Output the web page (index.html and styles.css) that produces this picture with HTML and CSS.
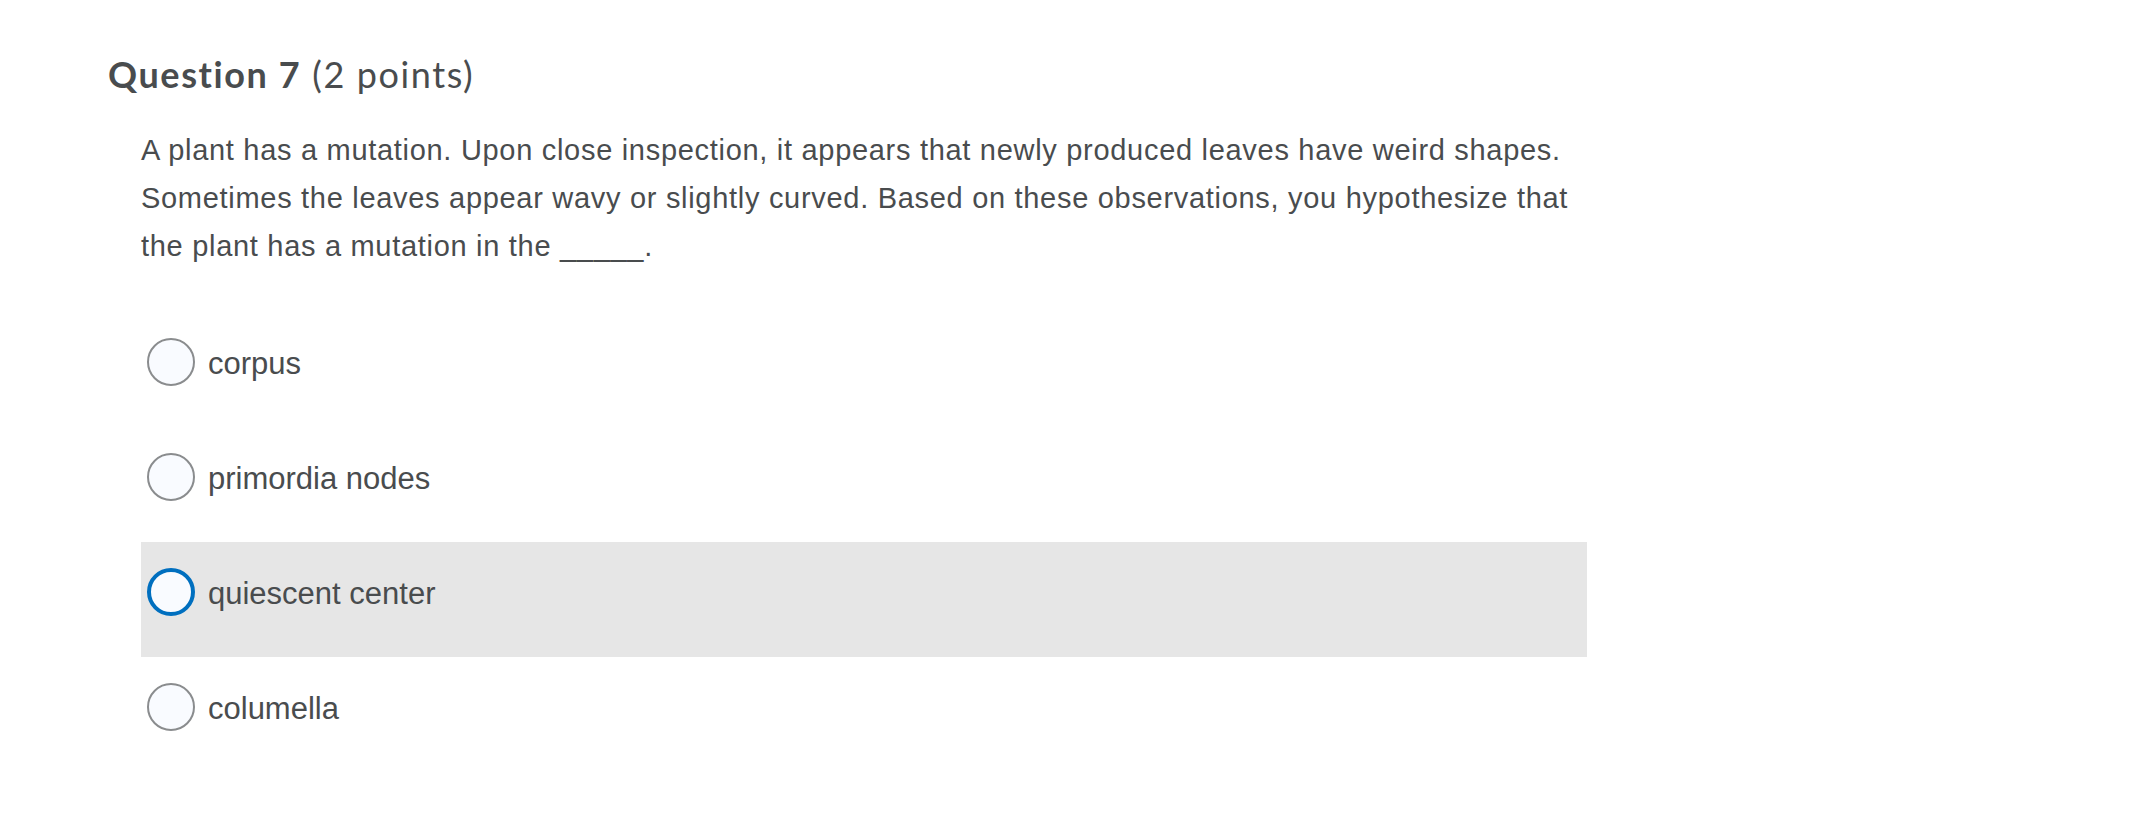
FILE: index.html
```html
<!DOCTYPE html>
<html lang="en">
<head>
<meta charset="utf-8">
<title>Question 7</title>
<link rel="stylesheet" href="styles.css">
</head>
<body>
<div class="page">
  <h2 class="q-title"><strong>Question 7</strong> <span class="pts">(2 points)</span></h2>
  <div class="q-body">
    <p class="q-text">A plant has a mutation. Upon close inspection, it appears that newly produced leaves have weird shapes. Sometimes the leaves appear wavy or slightly curved. Based on these observations, you hypothesize that the plant has a mutation in the _____.</p>
    <div class="options">
      <label class="option"><span class="radio"></span><span class="opt-text">corpus</span></label>
      <label class="option"><span class="radio"></span><span class="opt-text">primordia nodes</span></label>
      <label class="option option-focus"><span class="radio radio-focus"></span><span class="opt-text">quiescent center</span></label>
      <label class="option"><span class="radio"></span><span class="opt-text">columella</span></label>
    </div>
  </div>
</div>
</body>
</html>
```
FILE: styles.css
```css
html, body {
  margin: 0;
  padding: 0;
  background: #ffffff;
}

.page {
  padding: 50px 0 0 108px;
  color: #494c4e;
}

.q-title {
  margin: 0;
  font-family: Lato, "Open Sans", sans-serif;
  font-size: 36px;
  letter-spacing: 1.6px;
  font-weight: 400;
  line-height: 48px;
  color: #494c4e;
}

.q-title strong {
  font-weight: 700;
}

.q-body {
  margin-left: 33px;
  width: 1446px;
}

.q-text {
  margin: 28px 0 0 0;
  font-family: "Liberation Sans", Arial, sans-serif;
  font-size: 29px;
  letter-spacing: 0.7px;
  line-height: 48px;
  color: #494c4e;
}

.options {
  margin-top: 42px;
  display: flex;
  flex-direction: column;
}

.option {
  height: 115px;
  box-sizing: border-box;
  padding: 26px 0 0 6px;
  display: flex;
  align-items: flex-start;
}

.option-focus {
  background: #e6e6e6;
}

.radio {
  width: 48px;
  height: 48px;
  box-sizing: border-box;
  border-radius: 50%;
  border: 2px solid #8a8c8e;
  background: #f9fbff;
  flex: none;
}

.radio-focus {
  border: 4px solid #006fbf;
}

.opt-text {
  margin-left: 13px;
  padding-top: 2px;
  font-family: "Liberation Sans", Arial, sans-serif;
  font-size: 31px;
  line-height: 48px;
  color: #494c4e;
}
```
